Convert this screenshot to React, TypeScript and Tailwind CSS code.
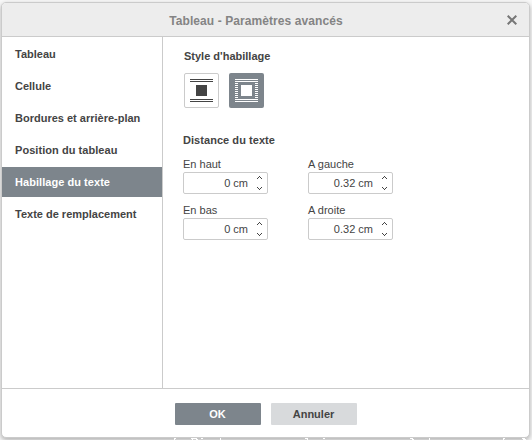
import React from "react";

const tabs = [
  "Tableau",
  "Cellule",
  "Bordures et arrière-plan",
  "Position du tableau",
  "Habillage du texte",
  "Texte de remplacement",
];

function WrapIcon({ around = false }: { around?: boolean }) {
  return (
    <svg width="23" height="23" viewBox="0 0 23 23" fill="currentColor" shapeRendering="crispEdges">
      <path d="M0 0h23v1H0zM0 2h23v1H0zM6 6h11v11H6zM0 20h23v1H0zM0 22h23v1H0z" />
      {around && (
        <path d="M0 4h3v1H0zM0 6h3v1H0zM0 8h3v1H0zM0 10h3v1H0zM0 12h3v1H0zM0 14h3v1H0zM0 16h3v1H0zM0 18h3v1H0zM20 4h3v1h-3zM20 6h3v1h-3zM20 8h3v1h-3zM20 10h3v1h-3zM20 12h3v1h-3zM20 14h3v1h-3zM20 16h3v1h-3zM20 18h3v1h-3z" />
      )}
    </svg>
  );
}

function Spinner({ label, value }: { label: string; value: string }) {
  return (
    <label className="flex w-[85px] flex-col">
      <span className="h-[14px] leading-[14px]">{label}</span>
      <span className="mt-px flex h-[22px] items-center justify-end rounded-[2px] border border-[#cbcbcb] bg-white pr-1">
        <span className="leading-[14px]">{value}</span>
        <svg className="ml-2" width="7" height="14" viewBox="0 0 7 14" fill="#444" shapeRendering="crispEdges">
          <path d="M3 0h1v1H3zM2 1h1v1H2zM4 1h1v1H4zM1 2h1v1H1zM5 2h1v1H5zM1 11h1v1H1zM5 11h1v1H5zM2 12h1v1H2zM4 12h1v1H4zM3 13h1v1H3z" />
        </svg>
      </span>
    </label>
  );
}

export default function App() {
  return (
    <div className="relative h-[440px] w-[532px] overflow-hidden bg-[#f8f8f8] pl-px pt-[2px] font-['Liberation_Sans',Arial,sans-serif] text-[11px] text-[#444]">
      <div className="flex h-[436px] w-[529px] flex-col overflow-hidden rounded-[5px] border border-[#cbcbcb] bg-white shadow-[0_2px_5px_rgba(0,0,0,0.3)]">
        <header className="flex h-[34px] shrink-0 items-center border-b border-[#cbcbcb] bg-[#ededed]">
          <h1 className="flex-1 pl-[3px] pt-[2px] text-center text-[12px] font-bold tracking-[0.08px] text-[#848484]">
            Tableau - Paramètres avancés
          </h1>
          <button className="mr-[12px] w-[10px]" aria-label="Fermer">
            <svg width="10" height="10" viewBox="0 0 10 10" stroke="#777" strokeWidth="2">
              <path d="M.7.7l8.6 8.6M9.3.7L.7 9.3" />
            </svg>
          </button>
        </header>
        <div className="flex h-[351px] shrink-0">
          <nav className="flex w-[161px] shrink-0 flex-col gap-[2px] border-r border-[#cbcbcb] pt-[2px] font-bold">
            {tabs.map((t, i) => (
              <div
                key={t}
                className={
                  i === 4
                    ? "flex h-[30px] items-center bg-[#7d858c] pl-[13px] tracking-[0.05px] text-white"
                    : i === 3
                      ? "flex h-[30px] items-center pl-[13px] tracking-[0.05px]"
                      : "flex h-[30px] items-center pl-[13px]"
                }
              >
                {t}
              </div>
            ))}
          </nav>
          <main className="pl-[20px] pt-[12px]">
            <h2 className="h-[14px] pl-px font-bold leading-[14px]">Style d'habillage</h2>
            <div className="mt-[10px] flex gap-[10px] pl-px">
              <button className="flex size-[35px] items-center justify-center rounded-[2px] border border-[#cbcbcb]">
                <WrapIcon />
              </button>
              <button className="flex size-[35px] items-center justify-center rounded-[2px] bg-[#7d858c] text-white">
                <WrapIcon around />
              </button>
            </div>
            <h2 className="mt-[25px] h-[14px] font-bold leading-[14px] tracking-[0.05px]">Distance du texte</h2>
            <div className="mt-[10px] grid grid-cols-[85px_85px] gap-x-[40px] gap-y-[9px]">
              <Spinner label="En haut" value="0 cm" />
              <Spinner label="A gauche" value="0.32 cm" />
              <Spinner label="En bas" value="0 cm" />
              <Spinner label="A droite" value="0.32 cm" />
            </div>
          </main>
        </div>
        <footer className="flex flex-1 items-start justify-center gap-[10px] border-t border-[#cbcbcb] pt-[14px] font-bold">
          <button className="h-[22px] w-[86px] rounded-[1px] bg-[#7d858c] text-white">OK</button>
          <button className="h-[22px] w-[86px] rounded-[1px] bg-[#d8dadc]">Annuler</button>
        </footer>
      </div>
      {/* Page content peeking out under the dialog */}
      <svg className="absolute bottom-0 left-0" width="532" height="2" viewBox="0 0 532 2" fill="#fff" shapeRendering="crispEdges">
        <path d="M174 0h2v1h-1v1h-1zM191 0h6v1h-6zM192 1h1v1h-1zM196 1h2v1h-2zM201 0h2v1h-2zM220 0h1v2h-1zM305 0h3v1h-3zM307 1h1v1h-1zM323 0h2v1h-2zM410 0h3v1h-3zM412 1h2v1h-2zM429 0h1v2h-1zM503 0h2v1h-2zM503 1h1v1h-1zM522 0h3v1h-3zM523 1h3v1h-3z" />
      </svg>
    </div>
  );
}
